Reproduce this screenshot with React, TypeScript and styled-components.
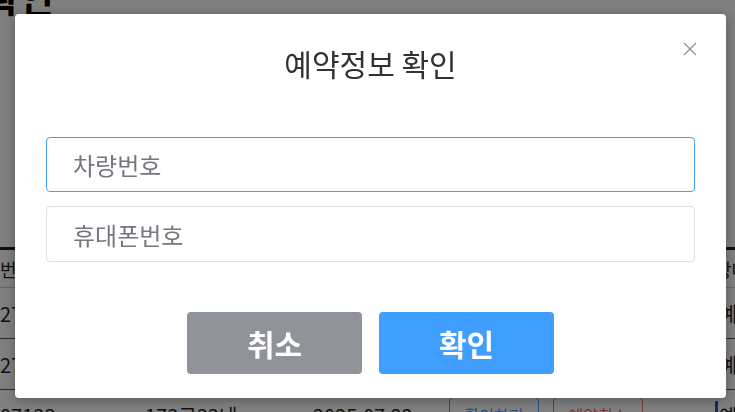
import React from 'react';
import styled, { createGlobalStyle } from 'styled-components';

const GlobalStyle = createGlobalStyle`
  html, body {
    margin: 0;
    padding: 0;
    overflow: hidden;
    font-family: 'Noto Sans CJK KR', 'Noto Sans', sans-serif;
    background: #fff;
  }
  * {
    box-sizing: border-box;
  }
`;

const rows = [
  { no: '2716', car: '123가4567', date: '2025.07.20', status: '예약완료' },
  { no: '2715', car: '456나7890', date: '2025.07.21', status: '예약완료' },
  { no: '07133', car: '173로33네', date: '2025.07.22', status: '예약' },
];

const App = () => {
  return (
    <>
      <GlobalStyle />
      <Page>
        <Heading>예약확인</Heading>
        <Table>
          <HeadRow>
            <Cell>번호</Cell>
            <Cell>차량번호</Cell>
            <Cell>예약일</Cell>
            <Cell>확인</Cell>
            <Cell>취소</Cell>
            <Cell>상태</Cell>
          </HeadRow>
          {rows.map((row) => {
            return (
              <Row key={row.no}>
                <Cell>{row.no}</Cell>
                <Cell>{row.car}</Cell>
                <Cell>{row.date}</Cell>
                <Cell>
                  <LineButton tone="#409eff">확인하기</LineButton>
                </Cell>
                <Cell>
                  <LineButton tone="#f56c6c">예약취소</LineButton>
                </Cell>
                <Cell>
                  <Status>{row.status}</Status>
                </Cell>
              </Row>
            );
          })}
        </Table>
      </Page>

      <Overlay>
        <Modal>
          <CloseButton aria-label="닫기">
            <svg width="14" height="14" viewBox="0 0 14 14">
              <path
                d="M1 1 L13 13 M13 1 L1 13"
                stroke="#909399"
                strokeWidth="1.3"
                fill="none"
              />
            </svg>
          </CloseButton>
          <Title>예약정보 확인</Title>
          <Fields>
            <Input focused autoFocus placeholder="차량번호" />
            <Input placeholder="휴대폰번호" />
          </Fields>
          <Buttons>
            <Button bg="#909399">취소</Button>
            <Button bg="#409eff">확인</Button>
          </Buttons>
        </Modal>
      </Overlay>
    </>
  );
};

const Page = styled.div`
  width: 735px;
  height: 412px;
  overflow: hidden;
`;

const Heading = styled.h1`
  margin: -24px 0 0 -86px;
  height: 271px;
  font-size: 38px;
  line-height: 40px;
  font-weight: 700;
  color: #000;
`;

const Table = styled.div`
  border-top: 3px solid #222;
`;

const HeadRow = styled.div`
  display: grid;
  grid-template-columns: 145px 168px 136px 104px 162px 1fr;
  height: 38px;
  align-items: center;
  border-bottom: 1px solid #ccc;
  font-size: 18px;
  color: #222;
  overflow: hidden;
`;

const Row = styled(HeadRow)`
  height: 51px;
  border-bottom: 1px solid #555;
  font-size: 20px;
`;

const Cell = styled.div`
  white-space: nowrap;
`;

const LineButton = styled.span<{ tone: string }>`
  display: inline-block;
  width: 90px;
  padding: 5px 0;
  text-align: center;
  border: 1px solid ${(props) => props.tone};
  border-radius: 4px;
  color: ${(props) => props.tone};
  font-size: 16px;
`;

const Status = styled.span`
  border-left: 3px solid #1e5bd6;
  padding-left: 1px;
  color: #222;
`;

const Overlay = styled.div`
  position: fixed;
  inset: 0;
  background: rgba(0, 0, 0, 0.5);
  display: flex;
  align-items: flex-start;
  justify-content: flex-start;
  padding: 14px 0 0 15px;
`;

const Modal = styled.div`
  position: relative;
  width: 711px;
  height: 384px;
  background: #fff;
  border-radius: 4px;
  box-shadow: 0 2px 12px rgba(0, 0, 0, 0.3);
  padding: 32px 31px 24px;
  display: flex;
  flex-direction: column;
`;

const CloseButton = styled.button`
  position: absolute;
  top: 28px;
  right: 29px;
  width: 14px;
  height: 14px;
  padding: 0;
  border: 0;
  background: none;
  line-height: 0;
  cursor: pointer;
`;

const Title = styled.h2`
  margin: 0;
  text-align: center;
  font-size: 30px;
  line-height: 35px;
  font-weight: 400;
  color: #303133;
`;

const Fields = styled.div`
  display: flex;
  flex-direction: column;
  gap: 14px;
  margin-top: 56px;
`;

const Input = styled.input<{ focused?: boolean }>`
  width: 100%;
  height: ${(props) => (props.focused ? '55px' : '56px')};
  padding: 0 0 0 26px;
  border: 1px solid ${(props) => (props.focused ? '#409eff' : '#dcdfe6')};
  border-radius: 4px;
  outline: none;
  font-family: 'Noto Sans CJK KR', sans-serif;
  font-size: 24px;
  color: #333;
  caret-color: #222;
  &::placeholder {
    color: #73777e;
  }
`;

const Buttons = styled.div`
  display: flex;
  justify-content: center;
  gap: 17px;
  margin-top: 50px;
`;

const Button = styled.button<{ bg: string }>`
  width: 175px;
  height: 62px;
  border: 0;
  border-radius: 4px;
  background: ${(props) => props.bg};
  color: #fff;
  font-family: 'Noto Sans CJK KR', sans-serif;
  font-size: 30px;
  font-weight: 700;
  cursor: pointer;
`;

export default App;
